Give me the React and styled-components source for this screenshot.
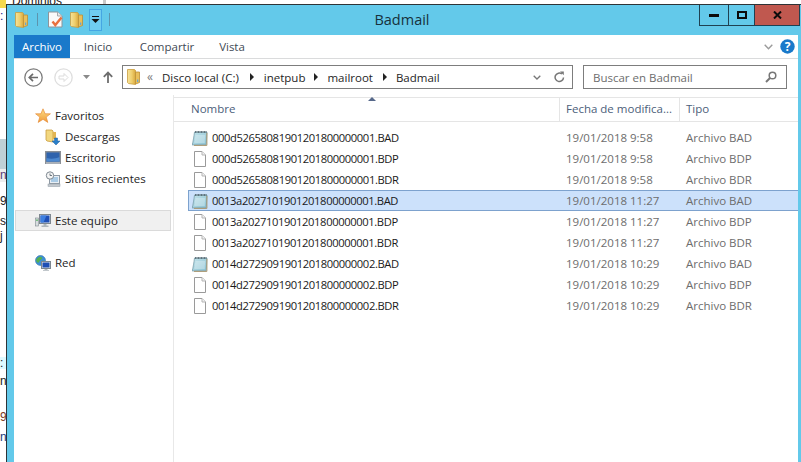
import React from "react";
import styled, { createGlobalStyle } from "styled-components";

const Global = createGlobalStyle`
  html, body {
    margin: 0;
    padding: 0;
    background: #fff;
    overflow: hidden;
  }
  * { box-sizing: border-box; }
`;

const UI_FONT = `"Open Sans", "Noto Sans", sans-serif`;

const Desktop = styled.div`
  display: flex;
  width: 801px;
  height: 462px;
  overflow: hidden;
  background: #fff;
  font-family: ${UI_FONT};
  font-size: 11.5px;
`;

const BackStrip = styled.div`
  flex: none;
  width: 6px;
  height: 462px;
  display: flex;
  flex-direction: column;
  overflow: hidden;
`;

const BackGap = styled.div`
  flex: none;
  height: ${(p) => p.$h}px;
  background: ${(p) => p.$bg || "transparent"};
`;

const BackText = styled.div`
  flex: none;
  height: ${(p) => p.$h || 12}px;
  line-height: 12px;
  font-family: "Liberation Sans", sans-serif;
  font-size: 12px;
  white-space: nowrap;
  color: ${(p) => p.$color || "#222"};
  background: ${(p) => p.$bg || "transparent"};
`;

const Main = styled.div`
  flex: 1;
  min-width: 0;
  display: flex;
  flex-direction: column;
`;

const BackSliver = styled.div`
  flex: none;
  height: 4px;
  overflow: hidden;
  display: flex;
  justify-content: space-between;
  padding: 0 0 0 6px;
  width: 100px;
  font-family: "Liberation Sans", sans-serif;
  font-size: 12px;
  line-height: 2px;
  color: #222;
`;

const BackThumb = styled.div`
  width: 3px;
  height: 4px;
  background: #c9c9c9;
`;

const Window = styled.div`
  flex: 1;
  min-height: 0;
  display: flex;
  flex-direction: column;
  background: #63c9ea;
  border-top: 1px solid #2e3336;
  border-left: 1px solid #2e3336;
`;

const TitleBar = styled.div`
  flex: none;
  height: 30px;
  display: grid;
  grid-template-columns: 1fr auto 1fr;
  padding: 0 1px 0 8px;
`;

const QuickAccess = styled.div`
  display: flex;
  align-items: center;
  height: 29px;
`;

const QuickSep = styled.div`
  flex: none;
  width: 1px;
  height: 13px;
  margin: 0 ${(p) => p.$right || 0}px 0 ${(p) => p.$left || 0}px;
  background: #5d94ad;
`;

const QuickFolder = styled.div`
  display: flex;
  margin-left: ${(p) => p.$left || 0}px;
`;

const QuickDrop = styled.div`
  flex: none;
  width: 13px;
  height: 22px;
  margin-left: 6px;
  display: flex;
  align-items: center;
  justify-content: center;
  background: #6fcdf0;
  border: 1px solid #45a6e3;
`;

const Title = styled.div`
  font-size: 14.5px;
  line-height: 29px;
  padding-right: 11px;
  color: #17313c;
`;

const WindowButtons = styled.div`
  justify-self: end;
  display: flex;
  height: 21px;
  border: 1px solid #1f4152;
  border-top: 0;
`;

const WinButton = styled.div`
  width: ${(p) => p.$w}px;
  display: flex;
  align-items: center;
  justify-content: center;
  background: ${(p) => p.$bg || "transparent"};
  border-left: ${(p) => (p.$first ? "0" : "1px solid #1f4152")};
`;

const Client = styled.div`
  flex: 1;
  min-height: 0;
  margin: 0 3px 0 7px;
  display: flex;
  flex-direction: column;
  background: #fff;
`;

const RibbonTabs = styled.div`
  flex: none;
  height: 24px;
  display: flex;
  align-items: stretch;
  border-bottom: 1px solid #dadbdc;
`;

const Tab = styled.div`
  width: ${(p) => p.$w}px;
  height: ${(p) => (p.$active ? "23px" : "auto")};
  display: flex;
  align-items: center;
  justify-content: center;
  color: ${(p) => (p.$active ? "#fff" : "#3f4a55")};
  background: ${(p) => (p.$active ? "#1979ca" : "transparent")};
`;

const RibbonEnd = styled.div`
  margin-left: auto;
  display: flex;
  align-items: center;
  gap: 7px;
  padding-right: 3px;
`;

const NavRow = styled.div`
  flex: none;
  height: 36px;
  display: flex;
  align-items: center;
  padding-left: 10px;
`;

const NavIcon = styled.div`
  flex: none;
  width: ${(p) => p.$w}px;
  margin-right: ${(p) => p.$mr || 0}px;
  margin-left: ${(p) => p.$ml || 0}px;
  display: flex;
  align-items: center;
  justify-content: center;
`;

const FieldBox = styled.div`
  flex: none;
  width: ${(p) => p.$w}px;
  height: 24px;
  margin-right: ${(p) => p.$mr || 0}px;
  display: flex;
  align-items: center;
  background: #fff;
  border: 1px solid #7d7d7d;
`;

const Crumb = styled.span`
  margin-right: ${(p) => p.$mr}px;
  color: #1e1e1e;
  white-space: nowrap;
`;

const CrumbArrow = styled.span`
  width: 0;
  height: 0;
  margin-right: ${(p) => p.$mr}px;
  border-left: 4px solid #222;
  border-top: 4px solid transparent;
  border-bottom: 4px solid transparent;
`;

const Chevrons = styled.span`
  width: 9px;
  margin: 0 6px 0 7px;
  line-height: 14px;
  color: #7b7b7b;
  font-size: 12px;
`;

const FieldEnd = styled.div`
  margin-left: auto;
  display: flex;
  align-items: center;
  gap: 13px;
  padding-right: ${(p) => p.$pr}px;
`;

const SearchHint = styled.span`
  padding-left: 9px;
  color: #6d6d6d;
`;

const Body = styled.div`
  flex: 1;
  min-height: 0;
  display: flex;
`;

const NavPane = styled.div`
  flex: none;
  width: 159px;
  padding-top: 10px;
`;

const NavGroup = styled.div`
  margin-bottom: ${(p) => p.$mb || 0}px;
`;

const TreeRow = styled.div`
  height: 21px;
  margin: 0 2px 0 1px;
  display: flex;
  align-items: center;
  gap: 4px;
  padding-left: ${(p) => (p.$sub ? 29 : 19)}px;
  color: #1e1e1e;
  background: ${(p) => (p.$on ? "#f0f0f0" : "transparent")};
  border: 1px solid ${(p) => (p.$on ? "#dadada" : "transparent")};
`;

const FilePane = styled.div`
  position: relative;
  flex: 1;
  min-width: 0;
  border-left: 1px solid #e8e8e8;
  padding-top: 2px;
`;

const SortArrow = styled.div`
  position: absolute;
  left: 194px;
  top: 2px;
  width: 0;
  height: 0;
  border-left: 4px solid transparent;
  border-right: 4px solid transparent;
  border-bottom: 4px solid #56688a;
`;

const HeaderRow = styled.div`
  height: 25px;
  display: flex;
  border-top: 1px solid #e5e5e5;
  border-bottom: 1px solid #e5e5e5;
`;

const HeaderCell = styled.div`
  width: ${(p) => (p.$w ? `${p.$w}px` : "auto")};
  flex: ${(p) => (p.$w ? "none" : "1")};
  display: flex;
  align-items: center;
  padding: 0 0 2px ${(p) => p.$pad}px;
  color: #4c607a;
  border-right: ${(p) => (p.$w ? "1px solid #e5e5e5" : "0")};
`;

const FileList = styled.div`
  padding: 5px 0 0 14px;
`;

const FileRow = styled.div`
  height: 21px;
  display: grid;
  grid-template-columns: 377px 120px 1fr;
  align-items: center;
  background: ${(p) => (p.$on ? "#cce1fb" : "transparent")};
  border: 1px solid ${(p) => (p.$on ? "#7da2ce" : "transparent")};
  border-right: 0;
`;

const FileName = styled.div`
  display: flex;
  align-items: center;
  gap: 4px;
  padding-left: 3px;
  color: #1a1a1a;
  font-size: 11.2px;
  white-space: nowrap;
  letter-spacing: -0.38px;
`;

const FileMeta = styled.div`
  color: #6d6d6d;
  white-space: nowrap;
`;

const FolderIcon = ({ id }) => (
  <svg width="13" height="16" viewBox="1 0 13 16">
    <defs>
      <linearGradient id={id} x1="0" y1="0" x2="1" y2="0">
        <stop offset="0" stopColor="#f6e39a" />
        <stop offset="0.55" stopColor="#efce6c" />
        <stop offset="1" stopColor="#d9a83e" />
      </linearGradient>
    </defs>
    <path d="M1.500 .5h7l1 1v14l-7-1-1-1z" fill={`url(#${id})`} stroke="#c99d3f" strokeWidth="0.8" />
    <path d="M9.500 3h4v10.500l-4 1.500z" fill="#e9bf5b" stroke="#bd8f35" strokeWidth="0.8" />
    <path d="M11 10.500h1.300v2.500H11z" fill="#6aa6cf" />
  </svg>
);

const DownloadsIcon = () => (
  <svg width="16" height="16" viewBox="0 0 16 16">
    <path d="M1 1h6l1 1v11l-6-1-1-1z" fill="#f2d77f" stroke="#c99d3f" strokeWidth="0.8" />
    <path d="M8 3h3v7H8z" fill="#e2b552" />
    <path d="M9.500 9h3v3H15l-4 4-4-4h2.500z" fill="#2a7fc9" stroke="#1d5e9c" strokeWidth="0.5" />
  </svg>
);

const DesktopIcon = () => (
  <svg width="16" height="14" viewBox="0 0 16 14">
    <rect x="0.500" y="0.500" width="15" height="12" fill="#7f8a99" stroke="#8a8f96" />
    <rect x="1.500" y="1.500" width="13" height="9" fill="#2f63ad" />
    <path d="M1.500 7c4 1 9 1 13-1v4.500h-13z" fill="#4c88cf" />
    <rect x="1" y="11" width="14" height="2" fill="#aab0b8" />
  </svg>
);

const RecentIcon = () => (
  <svg width="16" height="16" viewBox="0 0 16 16">
    <rect x="4.500" y="4.500" width="10" height="8" fill="#e8eef4" stroke="#8f9aa5" />
    <rect x="6" y="6" width="7" height="5" fill="#a9cbe6" />
    <rect x="3" y="13" width="12" height="2.500" fill="#c4c9ce" stroke="#8f9aa5" strokeWidth="0.5" />
    <circle cx="5" cy="4.500" r="3.700" fill="#f4f4f4" stroke="#7d8790" />
    <path d="M5 2.500v2h2" fill="none" stroke="#4e5a66" strokeWidth="0.8" />
  </svg>
);

const StarIcon = () => (
  <svg width="16" height="16" viewBox="0 0 16 16">
    <defs>
      <linearGradient id="star" x1="0" y1="0" x2="0" y2="1">
        <stop offset="0" stopColor="#fde08a" />
        <stop offset="1" stopColor="#f09a38" />
      </linearGradient>
    </defs>
    <path d="M8 .8l2.100 5h5.300l-4.200 3.300 1.600 5.300L8 11.300l-4.800 3.100 1.600-5.300L.6 5.800h5.300z" fill="url(#star)" stroke="#e58c3a" strokeWidth="0.7" />
  </svg>
);

const ComputerIcon = () => (
  <svg width="16" height="14" viewBox="0 0 16 14">
    <rect x="0.500" y="4" width="3" height="8" fill="#d8dde0" stroke="#7f8a8f" strokeWidth="0.6" />
    <rect x="1.300" y="5.500" width="1.400" height="1.400" fill="#3fae49" />
    <rect x="4.500" y="0.500" width="11" height="9" fill="#dfe4e8" stroke="#7d8790" />
    <rect x="5.500" y="1.500" width="9" height="7" fill="#1f4fb5" />
    <path d="M5.500 1.500h6l-3 7h-3z" fill="#3d7fe0" />
    <path d="M8.500 10h3v1.500h2V13h-7v-1.500h2z" fill="#aeb6bc" />
  </svg>
);

const NetworkIcon = () => (
  <svg width="16" height="16" viewBox="0 0 16 16">
    <circle cx="5.500" cy="5.500" r="5" fill="#3d8fd8" stroke="#3473a8" strokeWidth="0.6" />
    <path d="M2 3.500c2-2 4-2 5-1s-1 2-2 3-1 3-2.500 2S.8 5 2 3.500zM7 6c1.500-.5 3 0 3 1.500-1 1.200-3 1.500-3.500.5S6.200 6.300 7 6z" fill="#54b04f" />
    <rect x="6.500" y="6.500" width="9" height="7" fill="#dfe4e8" stroke="#7d8790" />
    <rect x="7.500" y="7.500" width="7" height="5" fill="#1f4fb5" />
    <path d="M9.500 14h3v1h1.500v.8h-6V15h1.500z" fill="#aeb6bc" />
  </svg>
);

const NotepadIcon = ({ id }) => (
  <svg width="16" height="16" viewBox="0 0 16 16">
    <defs>
      <linearGradient id={id} x1="0" y1="0" x2="1" y2="1">
        <stop offset="0" stopColor="#c3e3ea" />
        <stop offset="1" stopColor="#89c1d2" />
      </linearGradient>
    </defs>
    <path d="M2.500 2h12.500l-.8 12.800-14 .2c.8-3 1.800-9 2.300-13z" fill={`url(#${id})`} stroke="#6f94a1" strokeWidth="0.7" />
    <path d="M14.900 3v12.400H2" fill="none" stroke="#a9966f" strokeWidth="1" />
    <path d="M3.500 1v2M5 1v2M6.500 1v2M8 1v2M9.500 1v2M11 1v2M12.500 1v2M14 1v2" stroke="#4f5f68" strokeWidth="0.8" />
    <path d="M3.400 6h9.800M3 8h10M2.800 10h10M2.400 12h10.400" stroke="#e5f3f6" strokeWidth="0.8" />
  </svg>
);

const PageIcon = () => (
  <svg width="16" height="16" viewBox="0 0 16 16">
    <path d="M2.500 0.500h7.500l3.500 3.500v11.500h-11z" fill="#fff" stroke="#9a9a9a" />
    <path d="M10 .5V4h3.500" fill="#f2f2f2" stroke="#b5b5b5" />
  </svg>
);

const PropsIcon = () => (
  <svg width="15" height="17" viewBox="0 0 15 17">
    <path d="M.5 1h9l4.500 4v11H.5z" fill="#fafafa" stroke="#8f9499" />
    <path d="M9.500 1v4H14" fill="#e9e9e9" stroke="#a5a9ad" />
    <path d="M4.500 10.500l2.800 3.500 6.200-7.500" fill="none" stroke="#e8703f" strokeWidth="2.400" />
  </svg>
);

const App = () => {
  const files = [
    ["000d52658081901201800000001.BAD", "19/01/2018 9:58", "Archivo BAD"],
    ["000d52658081901201800000001.BDP", "19/01/2018 9:58", "Archivo BDP"],
    ["000d52658081901201800000001.BDR", "19/01/2018 9:58", "Archivo BDR"],
    ["0013a2027101901201800000001.BAD", "19/01/2018 11:27", "Archivo BAD"],
    ["0013a2027101901201800000001.BDP", "19/01/2018 11:27", "Archivo BDP"],
    ["0013a2027101901201800000001.BDR", "19/01/2018 11:27", "Archivo BDR"],
    ["0014d2729091901201800000002.BAD", "19/01/2018 10:29", "Archivo BAD"],
    ["0014d2729091901201800000002.BDP", "19/01/2018 10:29", "Archivo BDP"],
    ["0014d2729091901201800000002.BDR", "19/01/2018 10:29", "Archivo BDR"],
  ];

  return (
    <Desktop>
      <Global />
      <BackStrip>
        <BackGap $h={8} $bg="#f5d94e" />
        <BackGap $h={2} />
        <BackText $h={15} $color="#14208a">
          :
        </BackText>
        <BackGap $h={114} />
        <BackGap $h={30} $bg="#bfd0d6" />
        <BackText $h={13} $bg="#eeeeee" $color="#5a3d77">
          ni
        </BackText>
        <BackGap $h={13} />
        <BackText>9</BackText>
        <BackGap $h={8} />
        <BackText>s</BackText>
        <BackGap $h={3} />
        <BackText>j</BackText>
        <BackGap $h={115} />
        <BackText $bg="#dffaff">:</BackText>
        <BackGap $h={6} />
        <BackText>n</BackText>
        <BackGap $h={24} />
        <BackText $color="#7a3b1d">9E</BackText>
        <BackGap $h={8} />
        <BackText $color="#1d3b7a">n</BackText>
      </BackStrip>
      <Main>
        <BackSliver>
          <span>Dominios</span>
          <BackThumb />
        </BackSliver>
        <Window>
          <TitleBar>
            <QuickAccess>
              <FolderIcon id="qa1" />
              <QuickSep $left={9} $right={10} />
              <PropsIcon />
              <QuickFolder $left={7}>
                <FolderIcon id="qa2" />
              </QuickFolder>
              <QuickDrop>
                <svg width="9" height="7" viewBox="0 0 9 7">
                  <path d="M1 0h7v1H1zM.5 3h8L4.500 7z" fill="#111" />
                </svg>
              </QuickDrop>
              <QuickSep $left={7} />
            </QuickAccess>
            <Title>Badmail</Title>
            <WindowButtons>
              <WinButton $w={28} $first>
                <svg width="10" height="3" viewBox="0 0 10 3">
                  <rect width="10" height="3" fill="#0b0b0b" />
                </svg>
              </WinButton>
              <WinButton $w={26}>
                <svg width="10" height="8" viewBox="0 0 10 8">
                  <rect x="1" y="1" width="8" height="6" fill="none" stroke="#0b0b0b" strokeWidth="2" />
                </svg>
              </WinButton>
              <WinButton $w={45} $bg="#c0584f">
                <svg width="9" height="8" viewBox="0 0 9 8">
                  <path d="M1 .5l7 7M8 .5l-7 7" stroke="#0b0b0b" strokeWidth="2" />
                </svg>
              </WinButton>
            </WindowButtons>
          </TitleBar>
          <Client>
            <RibbonTabs>
              <Tab $w={56} $active>
                Archivo
              </Tab>
              <Tab $w={56}>Inicio</Tab>
              <Tab $w={82}>Compartir</Tab>
              <Tab $w={48}>Vista</Tab>
              <RibbonEnd>
                <svg width="9" height="6" viewBox="0 0 9 6">
                  <path d="M.7.700L4.500 4.700 8.300.700" fill="none" stroke="#9b9b9b" strokeWidth="1.400" />
                </svg>
                <svg width="15" height="15" viewBox="0 0 15 15">
                  <circle cx="7.500" cy="7.500" r="7.200" fill="#1979ca" />
                  <text x="7.500" y="11.800" textAnchor="middle" fontSize="12" fontWeight="700" fontFamily="Open Sans, sans-serif" fill="#fff">
                    ?
                  </text>
                </svg>
              </RibbonEnd>
            </RibbonTabs>
            <NavRow>
              <NavIcon $w={19} $mr={11}>
                <svg width="19" height="19" viewBox="0 0 19 19">
                  <circle cx="9.500" cy="9.500" r="8.700" fill="#fff" stroke="#7b7b7b" strokeWidth="1.300" />
                  <path d="M14 9.500H5.500M9 5.800L5.300 9.500 9 13.200" fill="none" stroke="#6b6b6b" strokeWidth="1.700" />
                </svg>
              </NavIcon>
              <NavIcon $w={19} $mr={10}>
                <svg width="19" height="19" viewBox="0 0 19 19">
                  <circle cx="9.500" cy="9.500" r="8.700" fill="#fff" stroke="#dedede" strokeWidth="1.300" />
                  <path d="M5 8h5V5.500l4 4-4 4V11H5z" fill="#fff" stroke="#dcdcdc" />
                </svg>
              </NavIcon>
              <NavIcon $w={7} $mr={13}>
                <svg width="7" height="4" viewBox="0 0 7 4">
                  <path d="M0 0h7L3.500 4z" fill="#8a8a8a" />
                </svg>
              </NavIcon>
              <NavIcon $w={10} $mr={9}>
                <svg width="10" height="12" viewBox="0 0 10 12">
                  <path d="M5 12V1.500M.8 5.800L5 1.500l4.200 4.300" fill="none" stroke="#6e6e6e" strokeWidth="1.800" />
                </svg>
              </NavIcon>
              <FieldBox $w={451} $mr={10}>
                <NavIcon $w={13} $ml={4}>
                  <FolderIcon id="addr" />
                </NavIcon>
                <Chevrons>«</Chevrons>
                <Crumb $mr={11}>Disco local (C:)</Crumb>
                <CrumbArrow $mr={10} />
                <Crumb $mr={9}>inetpub</Crumb>
                <CrumbArrow $mr={9} />
                <Crumb $mr={10}>mailroot</Crumb>
                <CrumbArrow $mr={9} />
                <Crumb $mr={0}>Badmail</Crumb>
                <FieldEnd $pr={7}>
                  <svg width="8" height="5" viewBox="0 0 8 5">
                    <path d="M.7.700L4 4l3.300-3.300" fill="none" stroke="#777" strokeWidth="1.300" />
                  </svg>
                  <svg width="11" height="12" viewBox="0 0 11 12">
                    <path d="M9.500 6.500a4.200 4.200 0 1 1-1.600-3.500" fill="none" stroke="#777" strokeWidth="1.500" />
                    <path d="M6 .5h3.800v3.800z" fill="#777" />
                  </svg>
                </FieldEnd>
              </FieldBox>
              <FieldBox $w={204}>
                <SearchHint>Buscar en Badmail</SearchHint>
                <FieldEnd $pr={9}>
                  <svg width="12" height="12" viewBox="0 0 12 12">
                    <circle cx="7.500" cy="4.500" r="3.300" fill="none" stroke="#777" strokeWidth="1.500" />
                    <path d="M5 7L1 11" stroke="#777" strokeWidth="2" />
                  </svg>
                </FieldEnd>
              </FieldBox>
            </NavRow>
            <Body>
              <NavPane>
                <NavGroup $mb={21}>
                  <TreeRow>
                    <StarIcon />
                    Favoritos
                  </TreeRow>
                  <TreeRow $sub>
                    <DownloadsIcon />
                    Descargas
                  </TreeRow>
                  <TreeRow $sub>
                    <DesktopIcon />
                    Escritorio
                  </TreeRow>
                  <TreeRow $sub>
                    <RecentIcon />
                    Sitios recientes
                  </TreeRow>
                </NavGroup>
                <NavGroup $mb={21}>
                  <TreeRow $on>
                    <ComputerIcon />
                    Este equipo
                  </TreeRow>
                </NavGroup>
                <NavGroup>
                  <TreeRow>
                    <NetworkIcon />
                    Red
                  </TreeRow>
                </NavGroup>
              </NavPane>
              <FilePane>
                <SortArrow />
                <HeaderRow>
                  <HeaderCell $w={386} $pad={17}>
                    Nombre
                  </HeaderCell>
                  <HeaderCell $w={120} $pad={6}>
                    Fecha de modifica...
                  </HeaderCell>
                  <HeaderCell $pad={6}>Tipo</HeaderCell>
                </HeaderRow>
                <FileList>
                  {files.map(([name, date, type], i) => (
                    <FileRow key={name} $on={i === 3}>
                      <FileName>
                        {name.endsWith("BAD") ? <NotepadIcon id={`note${i}`} /> : <PageIcon />}
                        {name}
                      </FileName>
                      <FileMeta>{date}</FileMeta>
                      <FileMeta>{type}</FileMeta>
                    </FileRow>
                  ))}
                </FileList>
              </FilePane>
            </Body>
          </Client>
        </Window>
      </Main>
    </Desktop>
  );
};

export default App;
